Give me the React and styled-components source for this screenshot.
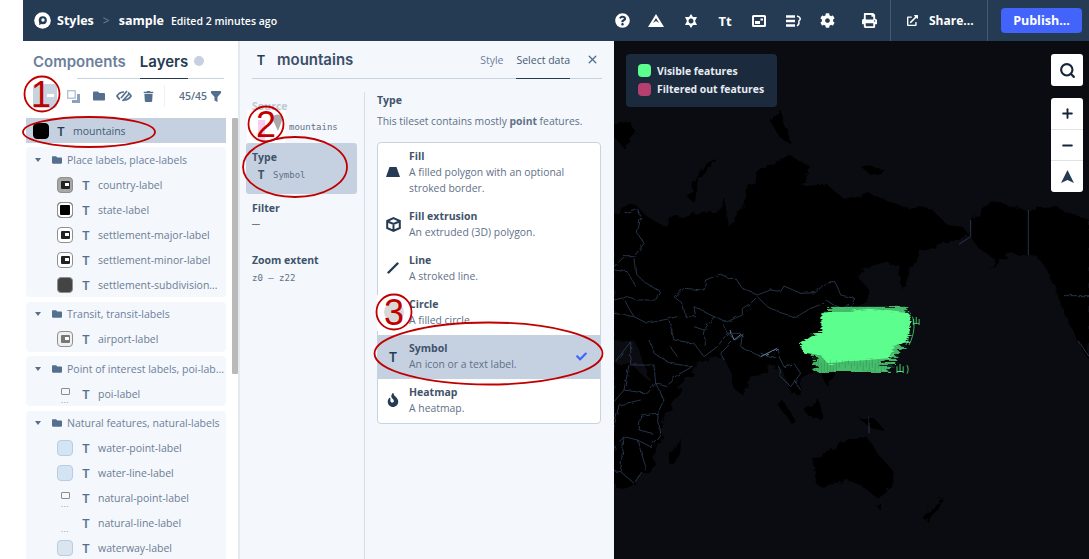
import React from "react";
import styled, { createGlobalStyle } from "styled-components";
import { FaCog, FaExternalLinkAlt, FaFire, FaFolder, FaPrint, FaQuestionCircle, FaTrash, FaCheck } from "react-icons/fa";
import { Minus, Plus, Search, X } from "lucide-react";

const GlobalStyle = createGlobalStyle`
  html, body {
    margin: 0;
    height: 100%;
    overflow: hidden;
    background: #fff;
    font-family: "Open Sans", "Liberation Sans", sans-serif;
  }
  * { box-sizing: border-box; }
`;

const layerGroups = [
  {
    name: "Place labels, place-labels",
    rows: [
      ["country-label", "greyImage"],
      ["state-label", "black"],
      ["settlement-major-label", "image"],
      ["settlement-minor-label", "image"],
      ["settlement-subdivision...", "dark"],
    ],
  },
  { name: "Transit, transit-labels", rows: [["airport-label", "paleImage"]] },
  { name: "Point of interest labels, poi-lab...", rows: [["poi-label", "iconDots"]] },
  {
    name: "Natural features, natural-labels",
    rows: [
      ["water-point-label", "water"],
      ["water-line-label", "water"],
      ["natural-point-label", "iconDots"],
      ["natural-line-label", "dots"],
      ["waterway-label", "waterGrey"],
    ],
  },
];

const layerTypes = [
  { name: "Fill", text: "A filled polygon with an optional stroked border.", icon: "fill", tall: true },
  { name: "Fill extrusion", text: "An extruded (3D) polygon.", icon: "cube" },
  { name: "Line", text: "A stroked line.", icon: "line" },
  { name: "Circle", text: "A filled circle.", icon: "circle" },
  { name: "Symbol", text: "An icon or a text label.", icon: "symbol", selected: true },
  { name: "Heatmap", text: "A heatmap.", icon: "heat" },
];

const Page = styled.div`
  display: flex;
  width: 1089px;
  height: 559px;
`;

const Gutter = styled.div`
  width: 23px;
  flex: none;
  background: #fff;
`;

const Main = styled.div`
  flex: 1;
  display: flex;
  flex-direction: column;
  min-width: 0;
`;

const TopBar = styled.header`
  height: 41px;
  flex: none;
  display: flex;
  align-items: center;
  background: #253b53;
  color: #fff;
  padding-left: 11px;
`;

const Crumb = styled.span`
  font-size: 12.5px;
  font-weight: 700;
  margin-left: ${(p) => p.$gap}px;
`;

const Edited = styled.span`
  font-size: 10.5px;
  font-weight: 600;
  margin-left: 7px;
`;

const Chevron = styled.span`
  color: #6f8299;
  font-size: 12px;
  margin-left: 9px;
`;

const BarTools = styled.div`
  margin-left: auto;
  display: flex;
  align-items: stretch;
  height: 41px;
`;

const ToolIcons = styled.div`
  display: flex;
  align-items: center;
  width: 285px;
`;

const ToolSlot = styled.span`
  width: 34.3px;
  display: flex;
  justify-content: center;
  align-items: center;
  font-size: 13px;
  font-weight: 700;
  margin-left: ${(p) => p.$gap || 0}px;
`;

const ShareLink = styled.div`
  width: 98px;
  border-left: 1px solid #465a72;
  border-right: 1px solid #465a72;
  display: flex;
  align-items: center;
  gap: 11px;
  padding-left: 16px;
  font-size: 12px;
  font-weight: 700;
`;

const PublishCell = styled.div`
  width: 101px;
  display: flex;
  align-items: center;
  padding-left: 13px;
`;

const PublishButton = styled.button`
  width: 81px;
  height: 25px;
  border: 0;
  border-radius: 4px;
  background: #4264fb;
  color: #fff;
  font: 700 12.5px "Open Sans", sans-serif;
  padding: 0;
`;

const Workspace = styled.div`
  flex: 1;
  display: flex;
  min-height: 0;
`;

const LeftPanel = styled.aside`
  width: 217px;
  flex: none;
  display: flex;
  flex-direction: column;
  background: #fff;
  border-right: 2px solid #e4e9f0;
  overflow: hidden;
  position: relative;
`;

const TabRow = styled.div`
  height: 38px;
  flex: none;
  display: flex;
  align-items: flex-end;
  gap: 14px;
  padding-left: 10px;
  margin-right: 14px;
  position: relative;
  &::after {
    content: "";
    position: absolute;
    left: 54px;
    right: 0;
    bottom: 0;
    height: 1px;
    background: #c8d3e0;
  }
`;

const PanelTab = styled.span`
  font-family: "Inter", "Open Sans", sans-serif;
  font-size: 15px;
  font-weight: 600;
  height: 100%;
  display: flex;
  align-items: center;
  padding-top: 3px;
  position: relative;
  color: ${(p) => (p.$active ? "#253b53" : "#6b809b")};
  z-index: 1;
  border-bottom: ${(p) => (p.$active ? "1px solid #253b53" : "0")};
`;

const TabDot = styled.span`
  width: 10px;
  height: 10px;
  border-radius: 50%;
  background: #c5d1e0;
  margin: 0 0 9px -8px;
  align-self: flex-end;
  position: relative;
  top: -4px;
`;

const LayerToolbar = styled.div`
  height: 28px;
  flex: none;
  display: flex;
  align-items: center;
  color: #55708f;
  padding-top: 6px;
`;

const AddButton = styled.span`
  width: 24px;
  height: 24px;
  margin: 0 4px 0 10px;
  background: #c8d3e0;
  border-radius: 3px;
  flex: none;
  position: relative;
  &::after {
    content: "";
    position: absolute;
    left: 14px;
    top: 10px;
    width: 7px;
    height: 3px;
    background: #fff;
  }
`;

const ToolButton = styled.span`
  width: 25px;
  display: flex;
  justify-content: center;
  align-items: center;
  flex: none;
`;

const Counter = styled.span`
  border-left: 1px solid #eef1f5;
  height: 100%;
  margin-left: 3px;
  flex: 1;
  display: flex;
  align-items: center;
  gap: 4px;
  padding-left: 14px;
  font-size: 10.5px;
  font-weight: 600;
  color: #5b6f8a;
`;

const LayerList = styled.div`
  padding: 11px 0 0 3px;
  width: 203px;
  display: flex;
  flex-direction: column;
  gap: 4.5px;
`;

const ScrollThumb = styled.div`
  position: absolute;
  left: 209px;
  top: 77px;
  width: 6px;
  height: 256px;
  background: #b9b9b9;
  border-radius: 1px;
`;

const SelectedRow = styled.div`
  height: 25px;
  background: #c5d1e0;
  display: flex;
  align-items: center;
  margin-bottom: -0.5px;
  color: #465a75;
  padding-left: 7px;
  font-size: 10.5px;
`;

const Group = styled.section`
  background: #f4f7fb;
  border-radius: 4px;
`;

const GroupHead = styled.div`
  height: 25px;
  display: flex;
  align-items: center;
  padding-left: 9px;
  font-size: 10.5px;
  color: #6b809b;
  white-space: nowrap;
  svg { flex: none; }
`;

const GroupName = styled.span`
  margin-left: 5px;
`;

const Caret = styled.span`
  width: 0;
  height: 0;
  border-left: 3px solid transparent;
  border-right: 3px solid transparent;
  border-top: 4px solid #55708f;
  margin-right: 11px;
`;

const Row = styled.div`
  height: 25px;
  display: flex;
  align-items: center;
  padding-left: 31px;
  font-size: 10.5px;
  color: #6b7d95;
  white-space: nowrap;
`;

const swatchFills = {
  greyImage: "#a8a8a8",
  black: "#000",
  solid: "#000",
  image: "#fff",
  paleImage: "#f0f0f0",
  dark: "#444",
  water: "#d3e5f5",
  waterGrey: "#dbe5f0",
};

const swatchBorder = (kind) => {
  if (kind === "solid") return "#000";
  return kind.startsWith("water") ? "#b9cde0" : "#8f8f8f";
};

const Swatch = styled.span`
  width: 16px;
  height: 16px;
  flex: none;
  border-radius: 4px;
  border: 1px solid ${(p) => swatchBorder(p.$kind)};
  background: ${(p) => swatchFills[p.$kind]};
  display: flex;
  align-items: center;
  justify-content: center;
  box-shadow: ${(p) => (p.$kind === "black" ? "inset 0 0 0 2px #fff" : "none")};
`;

const ImageGlyph = styled.span`
  width: 9px;
  height: 8px;
  background: ${(p) => (p.$pale ? "#777" : "#222")};
  border-radius: 1px;
  position: relative;
  &::after {
    content: "";
    position: absolute;
    right: 1px;
    top: 2px;
    width: 4px;
    height: 3px;
    background: #fff;
  }
`;

const DotsSlot = styled.span`
  width: 16px;
  height: 16px;
  flex: none;
  display: flex;
  flex-direction: column;
  align-items: center;
  justify-content: flex-end;
  color: #888;
  font-size: 8px;
  line-height: 5px;
  letter-spacing: 0.5px;
`;

const MiniFrame = styled.span`
  width: 9px;
  height: 7px;
  border: 1.5px solid #8d8d8d;
  border-radius: 1px;
  margin-bottom: 2px;
`;

const TGlyph = styled.span`
  font-size: ${(p) => p.$size || 13}px;
  font-weight: 600;
  color: ${(p) => p.$color || "#55708f"};
  margin: 0 ${(p) => p.$after ?? 8}px 0 ${(p) => p.$before ?? 9}px;
  width: ${(p) => p.$w || 8}px;
  display: inline-flex;
  justify-content: center;
`;

const MiddlePanel = styled.section`
  width: 374px;
  flex: none;
  background: #f4f7fb;
  display: flex;
  flex-direction: column;
  padding: 0 12px;
`;

const PanelHead = styled.div`
  height: 38px;
  flex: none;
  display: flex;
  align-items: center;
  border-bottom: 1px solid #c8d3e0;
  padding: 0 3px 0 5px;
  color: #253b53;
`;

const PanelTitle = styled.h2`
  margin: 0 auto 0 12px;
  font-family: "Inter", "Open Sans", sans-serif;
  font-size: 15px;
  font-weight: 600;
  color: #3b4f68;
`;

const HeadTab = styled.span`
  font-size: 10.5px;
  height: 38px;
  display: flex;
  align-items: center;
  margin-right: ${(p) => p.$after}px;
  color: ${(p) => (p.$active ? "#465a75" : "#6b809b")};
  border-bottom: ${(p) => (p.$active ? "1px solid #253b53" : "0")};
  margin-bottom: -1px;
`;

const DataColumns = styled.div`
  flex: 1;
  display: flex;
  padding-top: 13px;
  min-height: 0;
`;

const Summary = styled.div`
  width: 112px;
  flex: none;
  margin-right: -6px;
  position: relative;
`;

const Separator = styled.div`
  width: 1px;
  background: #d6deea;
  margin: 0 12px 0 6px;
`;

const SummaryBlock = styled.div`
  padding: 6px 0 0 6px;
  margin: 0 0 0 -6px;
  height: ${(p) => p.$h}px;
  width: 111px;
  border-radius: 3px;
  background: ${(p) => (p.$active ? "#c5d1e0" : "transparent")};
`;

const SummaryLabel = styled.div`
  font-size: 10.5px;
  font-weight: 700;
  line-height: 16px;
  color: ${(p) => (p.$faint ? "#c2c9d3" : "#3f536c")};
`;

const MonoValue = styled.div`
  font-family: "DejaVu Sans Mono", "Liberation Mono", monospace;
  font-size: ${(p) => p.$size || 9}px;
  line-height: 16px;
  color: #5f7088;
  padding-left: ${(p) => p.$indent || 0}px;
  margin-top: ${(p) => p.$top || 0}px;
  display: flex;
  align-items: center;
`;

const TypeColumn = styled.div`
  width: 224px;
  flex: none;
`;

const TypeHeading = styled.div`
  font-size: 10.5px;
  font-weight: 700;
  line-height: 16px;
  color: #3f536c;
`;

const TypeHint = styled.p`
  margin: 5px 0 13px;
  font-size: 10.35px;
  line-height: 16px;
  color: #5f7088;
  white-space: nowrap;
`;

const TypeList = styled.div`
  background: #fff;
  border: 1px solid #c8d3e0;
  border-radius: 4px;
  overflow: hidden;
`;

const TypeItem = styled.div`
  height: ${(p) => (p.$tall ? 60 : 44)}px;
  display: flex;
  align-items: center;
  padding: 0 13px 2px 7px;
  background: ${(p) => (p.$selected ? "#c5d1e0" : "transparent")};
`;

const TypeIcon = styled.span`
  width: 16px;
  flex: none;
  display: flex;
  justify-content: center;
  color: #253b53;
  margin-right: 8px;
`;

const TypeText = styled.div`
  flex: 1;
`;

const TypeName = styled.div`
  font-size: 10.5px;
  font-weight: 700;
  line-height: 16px;
  color: #3f536c;
`;

const TypeNote = styled.div`
  font-size: 10.4px;
  line-height: 16px;
  color: #5f7088;
`;

const MapPane = styled.div`
  flex: 1;
  position: relative;
  background: #0a0c12;
  overflow: hidden;
`;

const MapArt = styled.svg`
  display: block;
  width: 475px;
  height: 518px;
`;

const Legend = styled.div`
  position: absolute;
  left: 12px;
  top: 13px;
  width: 151px;
  height: 53px;
  border-radius: 4px;
  background: #1c2a3d;
  padding: 8px 0 0 12px;
  display: flex;
  flex-direction: column;
  gap: 1px;
`;

const LegendRow = styled.div`
  display: flex;
  align-items: center;
  gap: 6px;
  height: 17.5px;
  font-size: 10.4px;
  font-weight: 700;
  color: #e8edf3;
  white-space: nowrap;
`;

const LegendSwatch = styled.span`
  width: 13px;
  height: 13px;
  border-radius: 4px;
  background: ${(p) => p.$color};
`;

const MapButton = styled.div`
  position: absolute;
  left: 437px;
  top: 13px;
  width: 32px;
  height: 32px;
  background: #fff;
  border-radius: 3px;
  display: flex;
  align-items: center;
  justify-content: center;
  color: #16243a;
`;

const ZoomStack = styled.div`
  position: absolute;
  left: 437px;
  top: 57px;
  width: 32px;
  height: 94px;
  background: #fff;
  border-radius: 3px;
  display: flex;
  flex-direction: column;
  color: #16243a;
`;

const ZoomCell = styled.div`
  flex: 1;
  display: flex;
  align-items: center;
  justify-content: center;
  & + & { border-top: 1px solid #e2e2e2; }
`;

const Callouts = styled.svg`
  position: absolute;
  left: 0;
  top: 0;
  width: 1089px;
  height: 559px;
  pointer-events: none;
`;

const CalloutNumber = styled.text`
  font-family: "Liberation Sans", sans-serif;
  font-size: 36px;
  fill: #c00000;
  text-anchor: middle;
`;

const MountainIcon = () => (
  <svg width="16" height="13" viewBox="0 0 16 13" fill="#fff">
    <path fillRule="evenodd" d="M8 0l8 13H0zM8 4L5 9l3-2 3 2z" />
  </svg>
);

const LightIcon = () => (
  <svg width="14" height="14" viewBox="0 0 14 14" fill="#fff">
    <path fillRule="evenodd" d="M7 0l2 3h4l-2 4 2 4H9l-2 3-2-3H1l2-4-2-4h4zM7 4.500A2.500 2.500 0 1 0 7.010 4.500z" />
  </svg>
);

const ImageIcon = () => (
  <svg width="14" height="12" viewBox="0 0 14 12" fill="#fff">
    <path fillRule="evenodd" d="M1.500 0h11A1.500 1.500 0 0 1 14 1.500v9a1.500 1.500 0 0 1-1.500 1.500h-11A1.500 1.500 0 0 1 0 10.500v-9A1.500 1.500 0 0 1 1.500 0zM2 2v8h10V2zM3 6h5v3H3zM8.500 3.500h2.500v2H8.500z" />
  </svg>
);

const ListIcon = () => (
  <svg width="15" height="12" viewBox="0 0 15 12" fill="none" stroke="#fff">
    <path d="M0 1.500h9M0 6h9M0 10.500h9" strokeWidth="2.400" />
    <path d="M11 1c4 1 4 4 1.500 5M12.500 6c1 2 0 4-1.500 5" strokeWidth="1.500" />
  </svg>
);

const HideIcon = () => (
  <svg width="16" height="12" viewBox="0 0 16 12" fill="none" stroke="#55708f" strokeWidth="1.700">
    <path d="M4 9.500C2.500 8.500 1.500 7 1 6c1.500-2.500 4-4 7-4M12 2.500C13.500 3.500 14.500 5 15 6c-1.500 2.500-4 4-7 4" />
    <path d="M5 8L11 1M6.500 11L13 4" />
  </svg>
);

const CopyIcon = () => (
  <svg width="13" height="13" viewBox="0 0 13 13">
    <rect x="0.700" y="0.700" width="7.500" height="7.500" fill="none" stroke="#b4c2d3" strokeWidth="1.400" />
    <path d="M10 4h3v9H5v-3h5z" fill="#8ba1ba" />
  </svg>
);

const FunnelIcon = () => (
  <svg width="10" height="11" viewBox="0 0 10 11" fill="#55708f">
    <path fillRule="evenodd" d="M0 0h10v2L6.500 6v5l-3-1.500V6L0 2z" />
  </svg>
);

const LogoIcon = () => (
  <svg width="17" height="17" viewBox="0 0 17 17">
    <circle cx="8.500" cy="8.500" r="8.300" fill="#fff" />
    <circle cx="8.800" cy="8.200" r="4" fill="#253b53" />
    <path d="M5 13l1-5 4 3z" fill="#253b53" />
    <circle cx="9" cy="8" r="1.700" fill="#fff" />
  </svg>
);

const FillIcon = () => (
  <svg width="14" height="10" viewBox="0 0 14 10" fill="#253b53">
    <path d="M3.500 0h7L14 10H0z" />
  </svg>
);

const CubeIcon = () => (
  <svg width="15" height="15" viewBox="0 0 15 15" fill="none" stroke="#253b53" strokeWidth="2">
    <path d="M7.500 1.200L13.800 4v7l-6.300 2.800L1.200 11V4zM1.500 4.500l6 2.500 6-2.500M7.500 7v6.500" />
  </svg>
);

const LineIcon = () => (
  <svg width="12" height="12" viewBox="0 0 12 12" fill="none" stroke="#253b53" strokeWidth="2.400" strokeLinecap="round">
    <path d="M1.500 10.500L10.500 1.500" />
  </svg>
);

const typeIcon = (icon) => {
  if (icon === "fill") return <FillIcon />;
  if (icon === "cube") return <CubeIcon />;
  if (icon === "line") return <LineIcon />;
  if (icon === "heat") return <FaFire size={14} />;
  if (icon === "symbol") return <TGlyph $size={14} $color="#253b53" $before={0} $after={0}>T</TGlyph>;
  return null;
};

const LayerSwatch = ({ kind }) => {
  if (kind === "dots") return <DotsSlot>...</DotsSlot>;
  if (kind === "iconDots")
    return (
      <DotsSlot>
        <MiniFrame />
        ...
      </DotsSlot>
    );
  const hasImage = kind === "greyImage" || kind === "image" || kind === "paleImage";
  return <Swatch $kind={kind}>{hasImage && <ImageGlyph $pale={kind === "paleImage"} />}</Swatch>;
};

// blob edges are rough because the original is thousands of overlapping labels
const blobStrokes = () => {
  const out = [];
  let seed = 7;
  const rnd = (n) => {
    seed = (seed * 9301 + 49297) % 233280;
    return (seed / 233280) * n;
  };
  for (let y = 622; y < 816; y += 3) {
    let left = 622;
    let right = 892;
    if (y > 695 && y < 765) left = 560 + Math.abs(y - 735) * 0.9;
    if (y >= 765) left = 592;
    if (y > 725) right = 885 - (y - 725) * 0.55;
    if (y < 636) left = 640;
    out.push(`M${(left + rnd(24)).toFixed(0)} ${y}H${(right - rnd(y > 770 ? 60 : 24)).toFixed(0)}`);
  }
  return out.join("");
};

const bottomStreaks = () => {
  const out = [];
  for (let x = 604; x < 830; x += 9) {
    out.push(`M${x} ${772 + (x * 7) % 18}v${14 + (x * 3) % 26}`);
  }
  return out.join("");
};

const MapDrawing = () => (
  <MapArt viewBox="0 -177 1425 1554">
    <defs>
      <filter id="coast" x="-5%" y="-5%" width="110%" height="110%">
        <feTurbulence type="fractalNoise" baseFrequency="0.035" numOctaves="3" seed="4" />
        <feDisplacementMap in="SourceGraphic" scale="26" />
      </filter>
      <filter id="border" x="-5%" y="-5%" width="110%" height="110%">
        <feTurbulence type="fractalNoise" baseFrequency="0.05" numOctaves="2" seed="9" />
        <feDisplacementMap in="SourceGraphic" scale="12" />
      </filter>
      <filter id="rough" x="-10%" y="-10%" width="120%" height="120%">
        <feTurbulence type="fractalNoise" baseFrequency="0.015 0.25" numOctaves="2" seed="3" />
        <feDisplacementMap in="SourceGraphic" scale="16" />
      </filter>
    </defs>
    <g fill="#000" filter="url(#coast)">
      <path d="M0 340L60 310L95 345L140 375L180 350L250 340L305 335L330 290L345 380L395 300L400 255L450 205L525 165L595 205L560 255L640 255L695 300L770 280L870 320L950 325L1000 375L1045 380L1065 405L1000 430L920 450L885 510L865 570L850 490L770 490L730 530L770 575L730 630L700 680L670 720L640 770L665 830L640 860L610 800L590 825L560 835L560 880L530 880L500 800L470 800L420 830L385 885L365 870L335 780L300 770L250 785L230 830L190 860L150 890L120 885L100 810L60 720L0 730Z" />
      <path d="M0 790L50 790L100 840L145 860L210 865L170 920L145 960L140 1030L110 1110L50 1160L0 1160Z" />
      <path d="M1090 340L1130 300L1240 330L1320 320L1425 360V780L1390 720L1350 640L1300 510L1270 470L1190 460L1130 510L1145 480L1090 440L1060 400Z" />
      <path d="M598 1075L640 1060L700 1015L760 1010L790 1060L835 1110L835 1160L790 1192L745 1160L700 1140L625 1160L605 1150Z" />
      <path d="M165 1060L200 1015L200 1050L185 1095L165 1090Z" />
      <path d="M925 1255L960 1215L990 1190L975 1225L940 1262Z" />
      <path d="M785 1215H808L800 1232Z" />
      <path d="M220 290L260 200L315 170L280 210L245 255L240 310Z" />
      <path d="M465 60L500 30L530 130L500 115Z" />
      <path d="M0 70L45 60L60 90L35 150L0 110Z" />
      <path d="M510 905L545 965L530 970L490 910Z" />
      <path d="M570 930L620 900L625 950L590 955Z" />
      <path d="M730 950L780 955L820 1000L760 975Z" />
      <path d="M740 200L770 195L820 215L770 225Z" />
    </g>
    <g fill="none" stroke="#2c3f57" strokeWidth="2.500" strokeLinejoin="round" filter="url(#border)">
      <path d="M30 340L70 325L80 350L70 400L90 430L60 470L30 470L0 500" />
      <path d="M180 590L210 565L270 570L275 540L320 522L345 535L365 535L385 565L430 585L470 570L500 575L510 558L560 580L605 578L635 548L665 548L680 585L722 595L712 615L680 625L635 600L630 610L590 625L545 652L490 635L460 620L430 590L410 610L385 625L385 645L340 665L300 650L240 620L245 650L215 650L205 610Z" />
      <path d="M60 475L65 520L95 550L140 575L130 600L70 600L40 590L0 600" />
      <path d="M0 510L40 515L65 560M30 600L60 650L100 670L170 655L190 650M0 640L60 650" />
      <path d="M165 660L180 720L240 730L270 770L310 740L340 700L380 700M240 680L270 690L300 650M270 690L275 740M325 670L340 700L365 720L385 705L380 740L440 770L490 745L495 770L470 770L440 760" />
      <path d="M330 780L320 760L355 725M495 770L510 800L540 790L560 820L530 860L500 830L495 800M540 840L560 870" />
      <path d="M0 790L50 725V795H120M45 795L30 870L0 905M120 795L125 850L160 860M30 870L100 880L125 850L150 900L130 940L80 945L75 990M80 900L15 915L0 980M130 940L140 1000L110 1040L70 1020L30 1010L0 1045M75 990L115 1000M30 1010L20 1110L0 1115M70 1020L95 1100L60 1150L20 1115" />
      <path d="M105 720L120 760L170 790L235 800L190 825L160 850M170 740L190 770" />
      <path d="M1350 587H1425M1395 725L1425 770M765 950V1000" />
    </g>
    <path d="M1070 360V410L1035 433M1243 330V465" fill="none" stroke="#2c3f57" strokeWidth="2.500" />
    <path d="M348 690L360 720L385 700M440 770L490 745" fill="none" stroke="#6f8aa8" strokeWidth="2.500" filter="url(#border)" />
    <g filter="url(#rough)">
      <path d="M558 733L590 710L622 697L622 640L700 634L765 626L885 640L892 672L880 722L842 742L822 775L640 790L620 765L568 758Z" fill="#5bff8e" />
      <path d={blobStrokes()} stroke="#5bff8e" strokeWidth="2.500" fill="none" />
    </g>
    <path d={bottomStreaks()} stroke="#0a0c12" strokeWidth="2" opacity="0.22" fill="none" />
    <g fill="#5bff8e">
      <path d="M895 650c8 15 8 50-10 85M880 700c6 15 0 30-5 35M840 760l-14 20" fill="none" stroke="#5bff8e" strokeWidth="2" />
      <text x="845" y="815" fontSize="26" fontFamily="'Noto Sans CJK JP', sans-serif">山 )</text>
      <text x="895" y="672" fontSize="24" fontFamily="'Noto Sans CJK JP', sans-serif">山</text>
    </g>
  </MapArt>
);

export default function App() {
  return (
    <>
      <GlobalStyle />
      <Page>
        <Gutter />
        <Main>
          <TopBar>
            <LogoIcon />
            <Crumb $gap={6}>Styles</Crumb>
            <Chevron>&gt;</Chevron>
            <Crumb $gap={9}>sample</Crumb>
            <Edited>Edited 2 minutes ago</Edited>
            <BarTools>
              <ToolIcons>
                <ToolSlot><FaQuestionCircle size={15} /></ToolSlot>
                <ToolSlot><MountainIcon /></ToolSlot>
                <ToolSlot><LightIcon /></ToolSlot>
                <ToolSlot>Tt</ToolSlot>
                <ToolSlot><ImageIcon /></ToolSlot>
                <ToolSlot><ListIcon /></ToolSlot>
                <ToolSlot><FaCog size={15} /></ToolSlot>
                <ToolSlot $gap={7}><FaPrint size={15} /></ToolSlot>
              </ToolIcons>
              <ShareLink>
                <FaExternalLinkAlt size={11} />
                Share...
              </ShareLink>
              <PublishCell>
                <PublishButton>Publish...</PublishButton>
              </PublishCell>
            </BarTools>
          </TopBar>
          <Workspace>
            <LeftPanel>
              <TabRow>
                <PanelTab>Components</PanelTab>
                <PanelTab $active>Layers</PanelTab>
                <TabDot />
              </TabRow>
              <LayerToolbar>
                <AddButton />
                <ToolButton><CopyIcon /></ToolButton>
                <ToolButton><FaFolder size={12} /></ToolButton>
                <ToolButton><HideIcon /></ToolButton>
                <ToolButton><FaTrash size={11} /></ToolButton>
                <Counter>45/45 <FunnelIcon /></Counter>
              </LayerToolbar>
              <LayerList>
                <SelectedRow>
                  <Swatch $kind="solid" />
                  <TGlyph $before={8} $after={8} $color="#253b53">T</TGlyph>
                  mountains
                </SelectedRow>
                {layerGroups.map((group) => (
                  <Group key={group.name}>
                    <GroupHead>
                      <Caret />
                      <FaFolder size={10} color="#55708f" />
                      <GroupName>{group.name}</GroupName>
                    </GroupHead>
                    {group.rows.map(([name, kind]) => (
                      <Row key={name}>
                        <LayerSwatch kind={kind} />
                        <TGlyph>T</TGlyph>
                        {name}
                      </Row>
                    ))}
                  </Group>
                ))}
              </LayerList>
              <ScrollThumb />
            </LeftPanel>
            <MiddlePanel>
              <PanelHead>
                <TGlyph $size={14} $color="#253b53" $before={0} $after={0}>T</TGlyph>
                <PanelTitle>mountains</PanelTitle>
                <HeadTab $after={13}>Style</HeadTab>
                <HeadTab $active $after={16}>Select data</HeadTab>
                <X size={13} strokeWidth={2.5} color="#55708f" />
              </PanelHead>
              <DataColumns>
                <Summary>
                  <SummaryBlock $h={51}>
                    <SummaryLabel $faint>Source</SummaryLabel>
                    <MonoValue $indent={37} $top={5}>mountains</MonoValue>
                  </SummaryBlock>
                  <SummaryBlock $active $h={51}>
                    <SummaryLabel>Type</SummaryLabel>
                    <MonoValue $top={2}>
                      <TGlyph $size={12} $color="#3f536c" $before={5} $after={8}>T</TGlyph>
                      Symbol
                    </MonoValue>
                  </SummaryBlock>
                  <SummaryBlock $h={52}>
                    <SummaryLabel>Filter</SummaryLabel>
                    <MonoValue $size={13}>—</MonoValue>
                  </SummaryBlock>
                  <SummaryBlock $h={60}>
                    <SummaryLabel>Zoom extent</SummaryLabel>
                    <MonoValue $top={2}>z0 – z22</MonoValue>
                  </SummaryBlock>
                </Summary>
                <Separator />
                <TypeColumn>
                  <TypeHeading>Type</TypeHeading>
                  <TypeHint>This tileset contains mostly <b>point</b> features.</TypeHint>
                  <TypeList>
                    {layerTypes.map((type) => (
                      <TypeItem key={type.name} $tall={type.tall} $selected={type.selected}>
                        <TypeIcon>{typeIcon(type.icon)}</TypeIcon>
                        <TypeText>
                          <TypeName>{type.name}</TypeName>
                          <TypeNote>{type.text}</TypeNote>
                        </TypeText>
                        {type.selected && <FaCheck size={11} color="#4264fb" />}
                      </TypeItem>
                    ))}
                  </TypeList>
                </TypeColumn>
              </DataColumns>
            </MiddlePanel>
            <MapPane>
              <MapDrawing />
              <Legend>
                <LegendRow><LegendSwatch $color="#5bff8e" />Visible features</LegendRow>
                <LegendRow><LegendSwatch $color="#b5406f" />Filtered out features</LegendRow>
              </Legend>
              <MapButton><Search size={17} strokeWidth={3} /></MapButton>
              <ZoomStack>
                <ZoomCell><Plus size={15} strokeWidth={3} /></ZoomCell>
                <ZoomCell><Minus size={15} strokeWidth={3} /></ZoomCell>
                <ZoomCell>
                  <svg width="13" height="13" viewBox="0 0 13 13" fill="#253b53">
                    <path d="M6.500 0L13 13 6.500 10 0 13z" />
                  </svg>
                </ZoomCell>
              </ZoomStack>
            </MapPane>
          </Workspace>
        </Main>
      </Page>
      <Callouts viewBox="0 0 1089 559">
        <rect x="247" y="110" width="38" height="33" fill="#fff" />
        <path d="M272 118a7 9 0 0 1 11 0l-5 13z" fill="#a9a9a9" />
        <rect x="258" y="120" width="7" height="20" fill="#f6cdf0" />
        <rect x="377" y="295" width="30" height="36" fill="#fff" />
        <circle cx="394" cy="312" r="10" fill="#d8d8d8" />
        <g fill="none" stroke="#c00000" strokeWidth="1.800">
          <circle cx="42" cy="94" r="17.500" />
          <circle cx="266" cy="124" r="17.500" />
          <circle cx="394" cy="312" r="17.500" />
          <ellipse cx="89" cy="132" rx="66" ry="15" />
          <ellipse cx="295" cy="167" rx="52" ry="30" />
          <ellipse cx="488.500" cy="353.500" rx="114" ry="31" />
        </g>
        <CalloutNumber x="41" y="107">1</CalloutNumber>
        <CalloutNumber x="266" y="137">2</CalloutNumber>
        <CalloutNumber x="394" y="325">3</CalloutNumber>
      </Callouts>
    </>
  );
}
